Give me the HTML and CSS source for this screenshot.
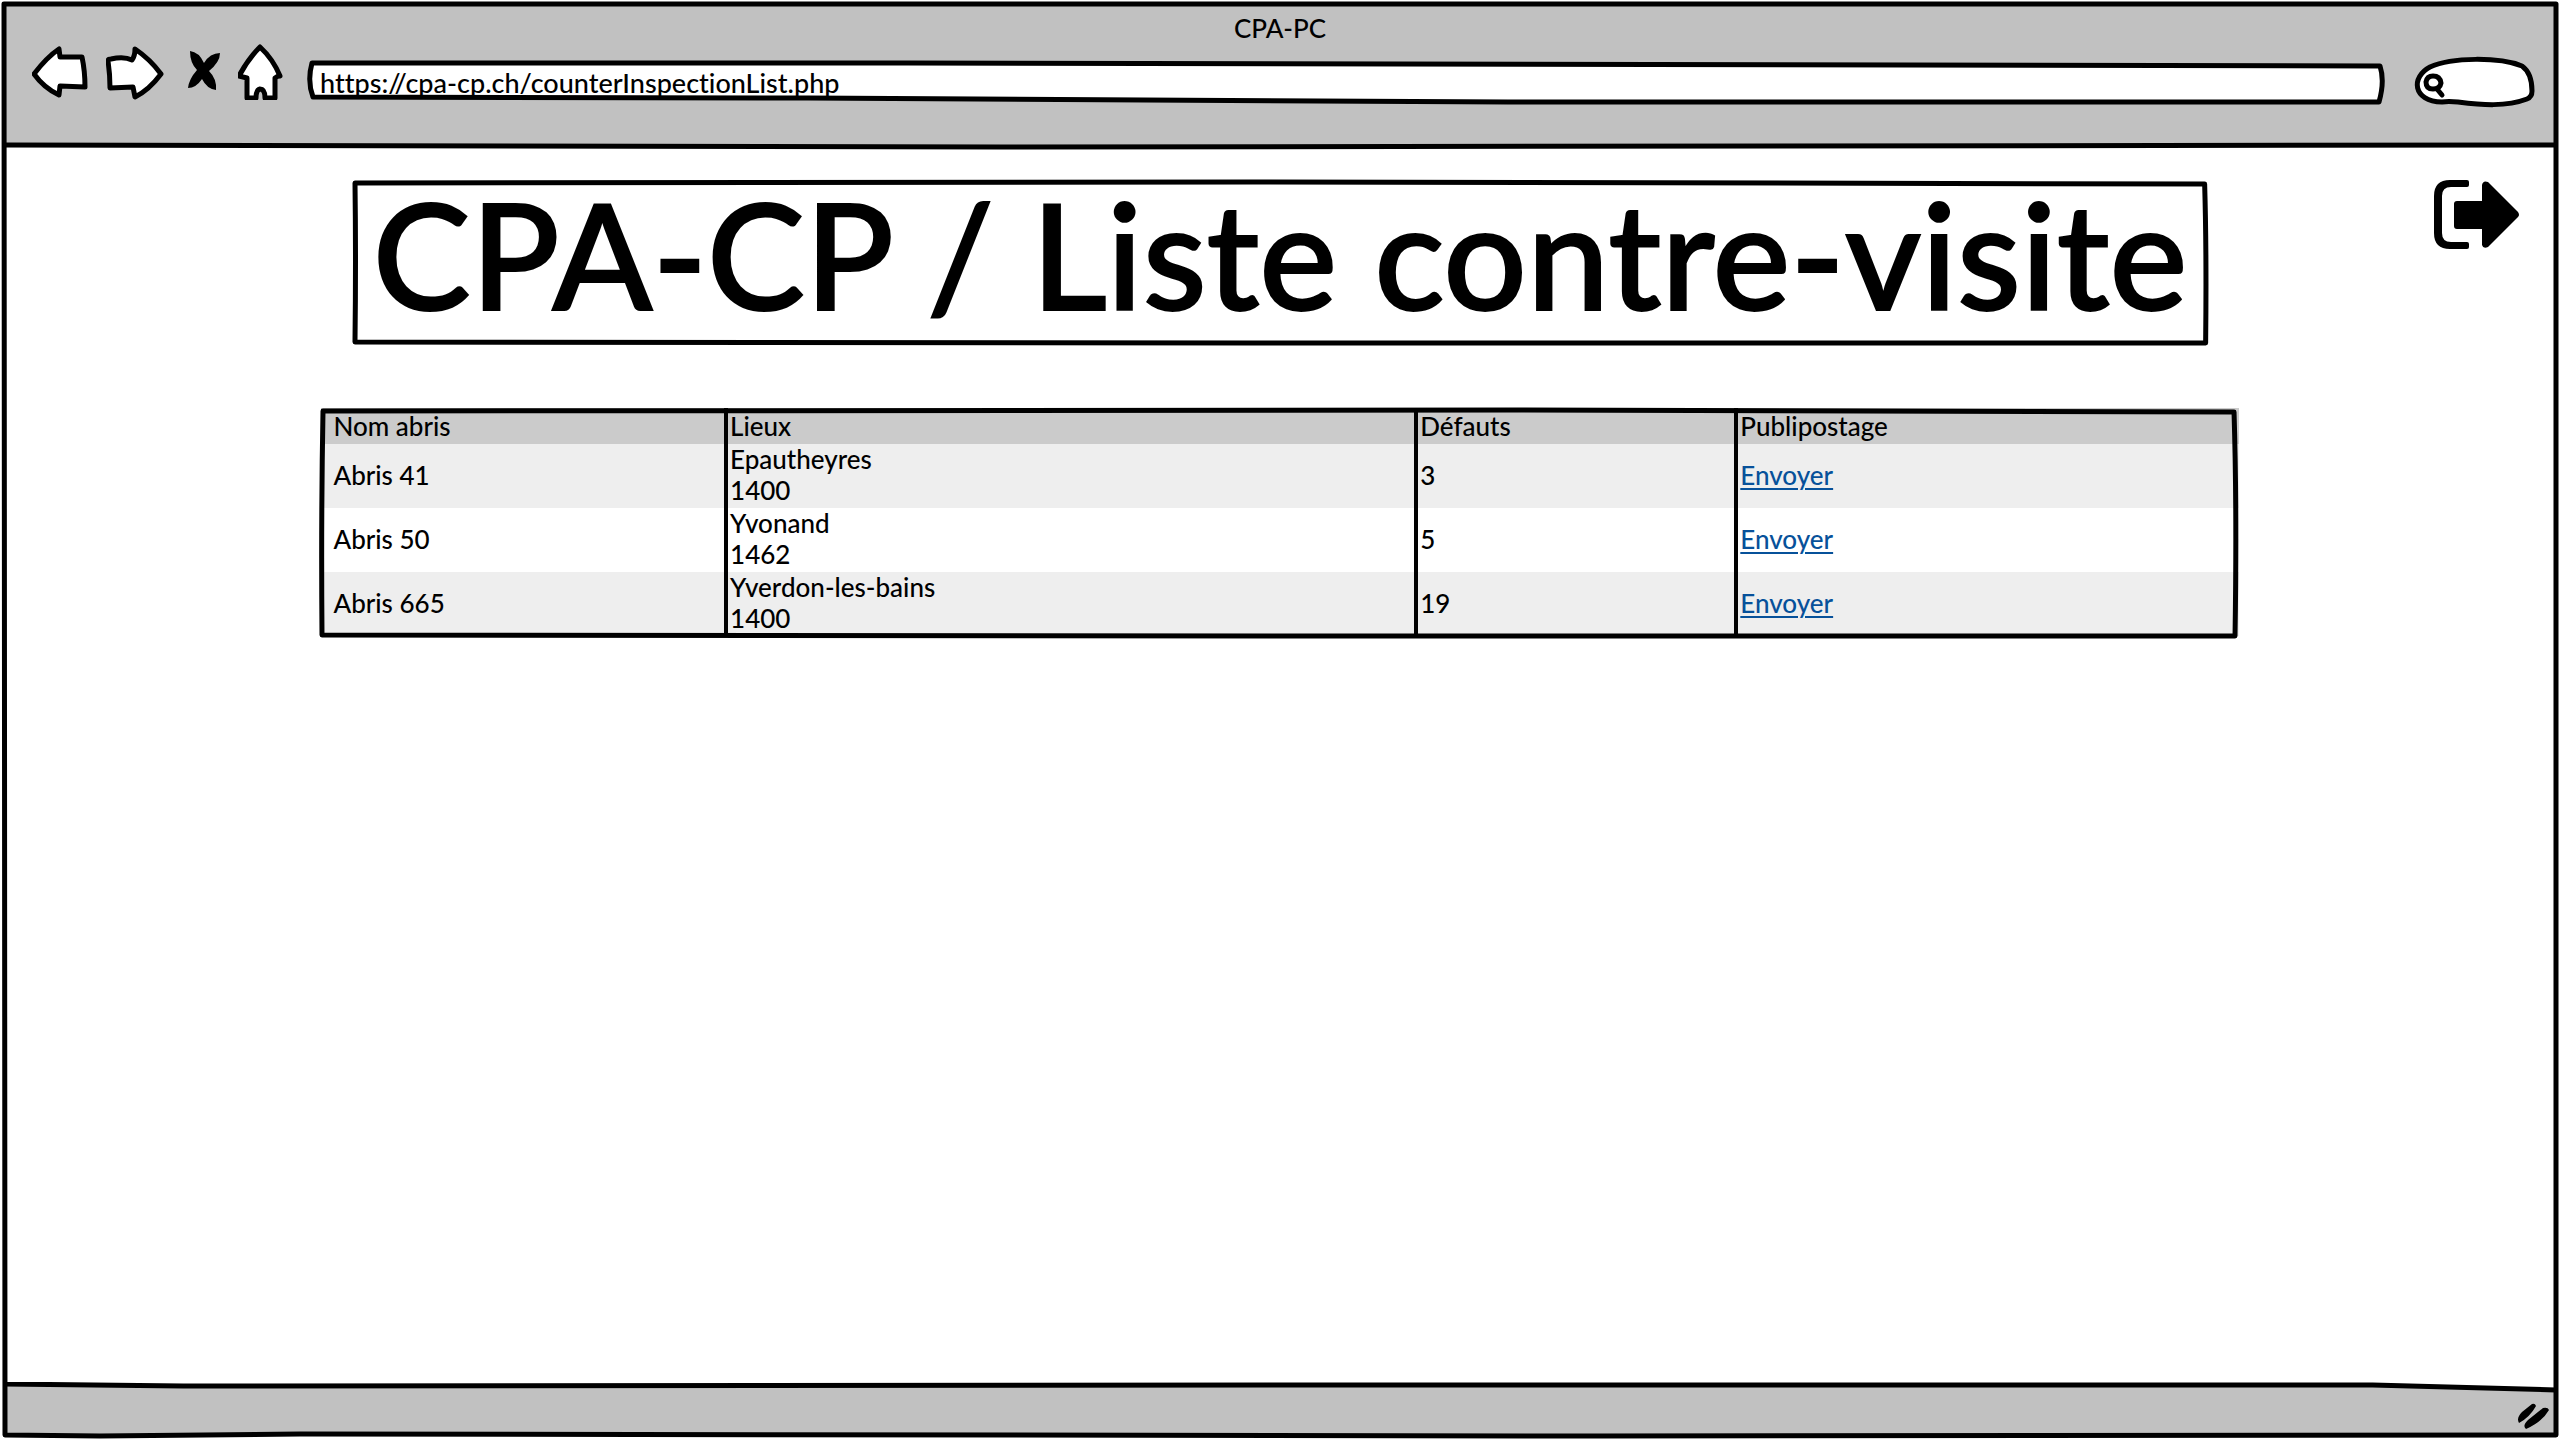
FILE: index.html
```html
<!DOCTYPE html>
<html lang="fr">
<head>
<meta charset="utf-8">
<title>CPA-PC</title>
<link rel="stylesheet" href="styles.css">
</head>
<body>
<div class="browser">
  <header class="chrome">
    <div class="chrome-title">CPA-PC</div>
    <div class="toolbar">
      <nav class="nav" aria-label="Navigation">
        <button type="button" class="icon-button" aria-label="Précédent">
          <svg width="56" height="56" viewBox="0 0 56 56"><path class="shape" d="M2 30 Q15 13 27 5 L28 13 L50 13 Q53 27 53 43 L28 42 L27 51 Q12 44 2 30Z"/></svg>
        </button>
        <button type="button" class="icon-button" aria-label="Suivant">
          <svg width="58" height="56" viewBox="0 0 58 56"><path class="shape" d="M2 17 Q2 15 5 15 Q18 12 26 16 Q29 12 29 5 Q44 15 55 30 Q43 46 29 53 L27 43 L4 44 Q4 30 2 17Z"/></svg>
        </button>
        <button type="button" class="icon-button" aria-label="Arrêter">
          <svg width="38" height="56" viewBox="0 0 38 56"><path d="M8 7 Q17 8 22 19 Q28 9 38 9 Q38 18 27 27 Q35 35 34 46 Q25 45 20 35 Q14 44 6 44 Q7 35 15 26 Q8 19 8 7Z"/></svg>
        </button>
        <button type="button" class="icon-button" aria-label="Accueil">
          <svg width="46" height="56" viewBox="0 0 46 56"><path class="shape" d="M22 3 Q35 15 42 32 Q39 32 37 34 L37 54 L27 54 Q27 45 22 45 Q18 46 18 54 L9 54 L9 34 L1 32 Q10 15 22 3Z"/></svg>
        </button>
      </nav>
      <label class="address">
        <svg class="sketch" viewBox="0 0 2080 44" preserveAspectRatio="none" aria-hidden="true"><path class="shape" d="M4 2 L600 2 L2072 5 Q2077 20 2071 41 L1200 41 L500 37 L5 36 Q-1 20 4 2Z"/></svg>
        <input class="address-input" type="text" aria-label="Adresse" value="https://cpa-cp.ch/counterInspectionList.php">
      </label>
      <label class="search">
        <svg class="sketch" viewBox="0 0 124 50" preserveAspectRatio="none" aria-hidden="true"><path class="shape" d="M30 45 C0 44 -1 20 18 10 C40 0 87 0 110 9 C117 14 120 22 120 34 Q120 40 115 42 C94 50 70 48 46 45 Q36 44 30 45Z"/><path class="lens" d="M21 19 Q28 19 29 26 Q28 32 21 32 Q14 32 14 25 Q15 19 21 19Z M25 32 L30 38"/></svg>
        <input class="search-input" type="text" aria-label="Rechercher">
      </label>
    </div>
    <svg class="rule" viewBox="0 0 2560 9" preserveAspectRatio="none" aria-hidden="true"><path class="fill-page" d="M0 3 L1000 5 L2560 3 V9 H0Z"/><path class="line" d="M0 3 L1000 5 L2560 3"/></svg>
  </header>

  <main class="page">
    <div class="heading">
      <h1 class="title">
        <svg class="sketch" viewBox="0 0 1855 166" preserveAspectRatio="none" aria-hidden="true"><path class="line" d="M3 3 L900 2 L1852 4 Q1854 70 1853 163 L900 163 L2 162 Q3 80 2 3Z"/></svg>
        CPA-CP / Liste contre-visite
      </h1>
      <button type="button" class="icon-button logout" aria-label="Se déconnecter">
        <svg width="86" height="70" viewBox="0 0 86 70"><path d="M16 0 H33 Q35 0 35 2 V5 Q35 7 33 7 H17 Q8 7 8 16 V53 Q8 62 17 62 H33 Q35 62 35 64 V67 Q35 69 33 69 H16 Q0 69 0 53 V16 Q0 0 16 0Z"/><path d="M23 21 H48 V5 Q49 0 54 2 L84 32 Q86 35 84 37 L54 67 Q49 69 48 65 V49 H23 Q20 49 20 46 V24 Q20 21 23 21Z"/></svg>
      </button>
    </div>

    <div class="table-wrap">
      <table class="list">
        <colgroup><col class="col-name"><col class="col-place"><col class="col-faults"><col></colgroup>
        <thead>
          <tr><th scope="col">Nom abris</th><th scope="col">Lieux</th><th scope="col">Défauts</th><th scope="col">Publipostage</th></tr>
        </thead>
        <tbody>
          <tr><td>Abris 41</td><td>Epautheyres<br>1400</td><td>3</td><td><a href="#envoyer-41">Envoyer</a></td></tr>
          <tr><td>Abris 50</td><td>Yvonand<br>1462</td><td>5</td><td><a href="#envoyer-50">Envoyer</a></td></tr>
          <tr><td>Abris 665</td><td>Yverdon-les-bains<br>1400</td><td>19</td><td><a href="#envoyer-665">Envoyer</a></td></tr>
        </tbody>
      </table>
      <svg class="sketch" viewBox="0 0 1917 228" preserveAspectRatio="none" aria-hidden="true"><path class="line" d="M2 3 L1200 2 L1913 4 Q1916 100 1914 228 L1000 228 L1 227 Q0 110 2 3Z"/></svg>
    </div>
  </main>

  <footer class="status">
    <svg class="rule" viewBox="0 0 2560 12" preserveAspectRatio="none" aria-hidden="true"><path class="fill-page" d="M0 0 H2560 V8 L2376 3 L1300 3 L180 4 L0 2Z"/><path class="line" d="M0 2 L180 4 L1300 3 L2376 3 L2560 8"/></svg>
    <svg class="grip" width="34" height="28" viewBox="0 0 34 28" aria-hidden="true"><path d="M16 2 Q19 1 20 4 Q14 15 3 21 Q0 16 6 10Z M27 6 Q32 5 33 8 Q26 20 10 27 Q6 24 12 18Z"/></svg>
  </footer>
  <svg class="sketch" viewBox="0 0 2560 1440" preserveAspectRatio="none" aria-hidden="true"><path class="line" d="M4 4 L2556 4 L2556 1435 L1600 1436 L300 1434 L100 1436 L5 1435Z"/></svg>
</div>
</body>
</html>
```
FILE: styles.css
```css
* {
  box-sizing: border-box;
}

body {
  margin: 0;
  background: #fff;
  color: #000;
  font: 500 26px/31px Lato, "Liberation Sans", sans-serif;
  font-variant-ligatures: none;
}

.browser {
  position: relative;
  display: flex;
  flex-direction: column;
  min-height: 100vh;
  padding: 4px;
}

/* Hand-drawn outlines stretch over the box that holds them. */
.sketch {
  position: absolute;
  inset: 0;
  width: 100%;
  height: 100%;
  overflow: visible;
  pointer-events: none;
}

.line,
.shape,
.lens {
  fill: none;
  stroke: #000;
  stroke-width: 5px;
  stroke-linejoin: round;
  stroke-linecap: round;
  vector-effect: non-scaling-stroke;
}

.shape {
  fill: #fff;
}

.fill-page {
  fill: #fff;
}

.rule {
  display: block;
  width: 100%;
}

.chrome {
  background: #c1c1c1;
}

.chrome .rule {
  height: 9px;
}

.chrome-title {
  padding-top: 8px;
  line-height: 32px;
  text-align: center;
}

.toolbar {
  display: flex;
  gap: 24px;
  height: 98px;
  padding: 0 20px 0 28px;
}

.nav {
  display: flex;
  align-items: flex-start;
  gap: 18px;
}

.icon-button {
  display: block;
  padding: 0;
  border: 0;
  background: none;
  cursor: pointer;
}

.icon-button svg {
  display: block;
}

.address,
.search {
  position: relative;
  margin-top: 17px;
}

.address {
  flex: 1;
  height: 44px;
}

.search {
  width: 124px;
  height: 50px;
  margin-top: 13px;
}

.address-input,
.search-input {
  position: relative;
  display: block;
  width: 100%;
  height: 42px;
  padding: 0 12px;
  border: 0;
  outline: 0;
  background: transparent;
  color: inherit;
  font: inherit;
  font-variant-ligatures: none;
}

.address-input {
  font-size: 27px;
}

.search-input {
  padding-left: 40px;
}

.page {
  flex: 1;
  padding: 29px 36px 40px;
}

.heading {
  display: grid;
  grid-template-columns: 1fr auto 1fr;
  align-items: start;
}

.title {
  position: relative;
  grid-column: 2;
  margin: 0;
  padding: 0 20px 20px;
  font-size: 147px;
  font-weight: 500;
  line-height: 146px;
  white-space: nowrap;
  -webkit-text-stroke: 2px #000;
}

.logout {
  justify-self: end;
}

.table-wrap {
  position: relative;
  width: 77.3%;
  margin: 62px auto 0;
}

.list {
  width: 100%;
  border-collapse: separate;
  border-spacing: 0;
  table-layout: fixed;
}

.col-name {
  width: 21%;
}

.col-place {
  width: 36%;
}

.col-faults {
  width: 16.7%;
}

.list th,
.list td {
  height: 64px;
  padding: 0 2px 2px;
  border-left: 4px solid #000;
  font-weight: inherit;
  text-align: left;
}

.list th {
  height: 36px;
  padding-top: 3px;
  background: #cbcbcb;
}

.list th:first-child,
.list td:first-child {
  padding-left: 12px;
  border-left: 0;
}

.list tbody tr:nth-child(odd) {
  background: #eee;
}

.list a {
  color: #07519a;
  text-decoration-thickness: 2px;
  text-underline-offset: 3px;
}

.status {
  display: flex;
  flex-direction: column;
  height: 54px;
  background: #c1c1c1;
}

.status .rule {
  height: 12px;
}

.grip {
  align-self: flex-end;
  margin: 8px 6px 0 0;
}
```
